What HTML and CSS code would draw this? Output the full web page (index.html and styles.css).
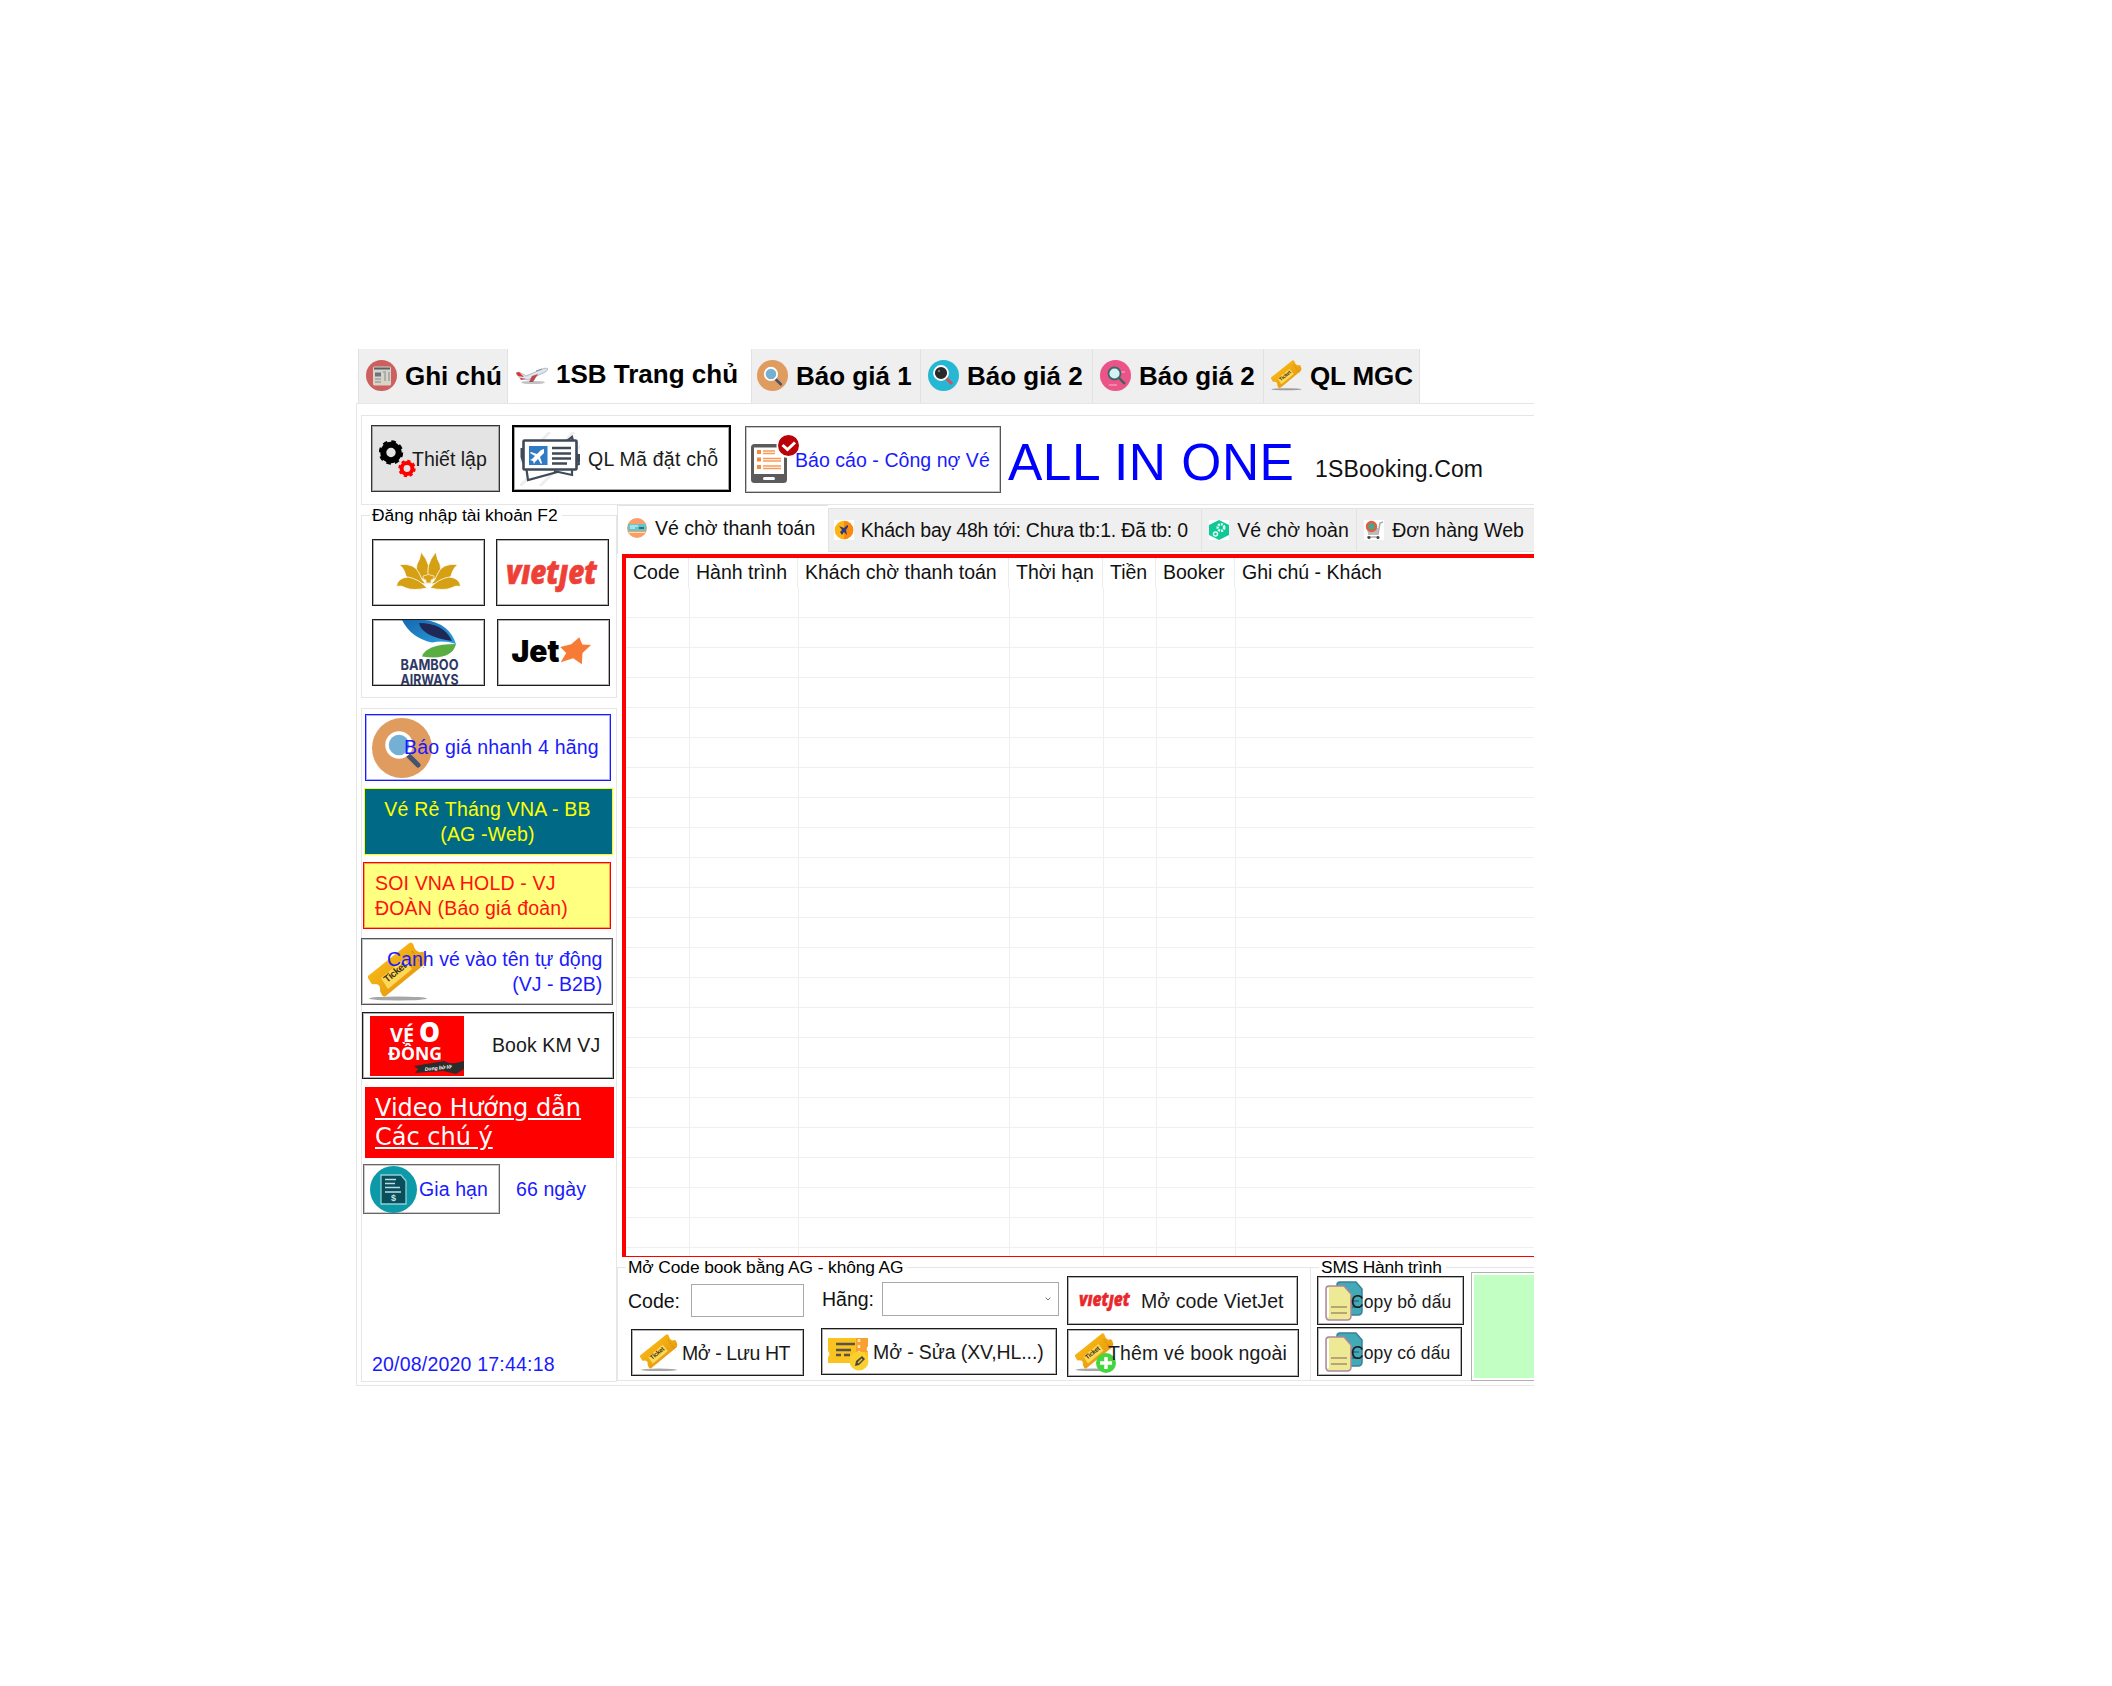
FILE: index.html
```html
<!DOCTYPE html>
<html lang="vi">
<head>
<meta charset="utf-8">
<title>1SBooking - All in one</title>
<link rel="stylesheet" href="styles.css">
</head>
<body>
<svg class="defs" width="0" height="0" aria-hidden="true">
  <defs>
    <linearGradient id="gold" x1="0" y1="0" x2="1" y2="1"><stop offset="0" stop-color="#ffc81c"/><stop offset="1" stop-color="#df8a0a"/></linearGradient>
    <linearGradient id="blue" x1="0" y1="0" x2="1" y2="1"><stop offset="0" stop-color="#1668b0"/><stop offset="1" stop-color="#2ba0dc"/></linearGradient>
    <symbol id="ticket" viewBox="0 0 60 60">
      <ellipse cx="30" cy="56.500" rx="29" ry="2" fill="#000" opacity=".35"/>
      <path d="M0 34 40 2q3-3 5 0l2 5q3 4 6 3 2-1 4 1l2 6-1 4L19 53q-3 3-5 0l-2-4q1-7-5-7-3 1-4-1L0 36z" fill="url(#gold)"/>
      <path d="M13 36 36 17l8 10-24 20z" fill="#ffd858"/>
      <path d="m44 9 12 17" stroke="#c97a08" stroke-dasharray="3 2" fill="none"/>
      <text x="0" y="0" transform="translate(19 41) rotate(-39)" font-family="Liberation Sans" font-weight="700" font-size="10" textLength="26" fill="#43350c">Ticket</text>
    </symbol>
    <symbol id="copy" viewBox="0 0 38 40">
      <path d="M15 1h16l6 7v22q0 4-4 4H15q-3 0-3-3V4q0-3 3-3z" fill="#42a9b7" stroke="#3b7f99" stroke-width="1.500"/>
      <path d="M26 20h8m-8 6h8" stroke="#2d6f85" stroke-width="1.500"/>
      <path d="M4 5h15l7 8v22q0 4-4 4H4q-3 0-3-4V8q0-3 3-3z" fill="#eee995" stroke="#ad86a0" stroke-width="1.500"/>
      <path d="M3 7v29" stroke="#fff" stroke-width="2"/>
      <path d="M6 26h16M6 32h16" stroke="#a98c6c" stroke-width="1.500"/>
    </symbol>
    <symbol id="search" viewBox="0 0 60 60">
      <path d="m36 37 10 10" stroke="#44546e" stroke-width="5" stroke-linecap="round"/>
      <circle cx="27" cy="27" r="12" fill="#74b0d4" stroke="#fff" stroke-width="3.500"/>
    </symbol>
    <g id="petals">
      <path d="M48 12Q60 26 54.500 39 40 41 44 24 47 20 48 12z"/>
      <path d="M26 24.500Q42 23 46 33 49 41 53 44 38 43 33 36 31 28 26 24.500z"/>
      <path d="M23.500 46.500Q24 38 35 37 46 39 54 48 40 51 33 48 28 45 23.500 46.500z"/>
    </g>
  </defs>
</svg>

<main class="app">
  <nav class="tabs">
    <div class="tab tab-note">
      <svg class="tab-icon" viewBox="0 0 31 31"><circle cx="15.500" cy="15.500" r="15.500" fill="#cc5f5f"/><rect x="7" y="6.500" width="18" height="19" rx="1.500" fill="#d8d3c4"/><path d="M8 8.500h16" stroke="#555f6e" stroke-width="2"/><path d="M9 12.500h6v4H9z" fill="#66758a"/><path d="M17 12h2v9m4-9v9M9 19h6m-6 3h6" stroke="#a9b0ae" stroke-width="2" fill="none"/></svg>
      <span>Ghi chú</span>
    </div>
    <div class="tab tab-home">
      <svg class="tab-icon" viewBox="0 0 32 20"><ellipse cx="17" cy="17.500" rx="12" ry="1.600" fill="#777" opacity=".45"/><path d="M0 8 3 7l7 4 14-6q6-3 8-1-1 3-7 5L12 15l-8-2z" fill="#dfe5ec" stroke="#8894a6" stroke-width=".6"/><path d="m0 8 3-1 5 5-6-1z" fill="#d33"/><path d="m4 13 6 1-5 1z" fill="#c33"/><path d="m16 11 6-2-5 8h-4z" fill="#b94a4c"/><path d="m20 6 6-2" stroke="#8090a0"/></svg>
      <span>1SB Trang chủ</span>
    </div>
    <div class="tab tab-q1">
      <svg class="tab-icon" viewBox="0 0 60 60"><circle cx="30" cy="30" r="30" fill="#e09b5f"/><use href="#search"/></svg>
      <span>Báo giá 1</span>
    </div>
    <div class="tab tab-q2">
      <svg class="tab-icon" viewBox="0 0 31 31"><circle cx="15.500" cy="15.500" r="15.500" fill="#26b7d3"/><path d="m18 18 6 6" stroke="#d4505c" stroke-width="3"/><circle cx="13" cy="13" r="7" fill="#2b2829" stroke="#fff" stroke-width="1.800"/><circle cx="11" cy="11" r="1.200" fill="#777"/></svg>
      <span>Báo giá 2</span>
    </div>
    <div class="tab tab-q3">
      <svg class="tab-icon" viewBox="0 0 31 31"><circle cx="15.500" cy="15.500" r="15.500" fill="#ea5486"/><path d="M9 25h8m4-13h4" stroke="#f597b6" stroke-width="1.500"/><path d="m19 18 6 6" stroke="#396558" stroke-width="2.400"/><circle cx="14.500" cy="13.500" r="6" fill="#d4f2f2" stroke="#3d6770" stroke-width="1.800"/></svg>
      <span>Báo giá 2</span>
    </div>
    <div class="tab tab-mgc">
      <svg class="tab-icon" viewBox="0 0 60 60"><use href="#ticket"/></svg>
      <span>QL MGC</span>
    </div>
  </nav>

  <section class="panel">
    <header class="toolbar">
      <button class="btn btn-setup">
        <svg class="ic-gears" viewBox="0 0 37 38"><circle cx="12" cy="12.500" r="7.700" fill="none" stroke="#000" stroke-width="6"/><circle cx="12" cy="12.500" r="10.800" fill="none" stroke="#000" stroke-width="2.800" stroke-dasharray="4.500 3.980"/><circle cx="28" cy="28.500" r="5.400" fill="none" stroke="#f00" stroke-width="4"/><circle cx="28" cy="28.500" r="7.600" fill="none" stroke="#f00" stroke-width="2.200" stroke-dasharray="3.200 2.770"/></svg>
        <span>Thiết lập</span>
      </button>
      <button class="btn btn-pnr">
        <svg class="ic-pnr" viewBox="0 0 60 54"><path d="M0 54 54 0M20 54 60 14M0 30 30 0" stroke="#eee" stroke-width="3"/><path d="m5 27 3 21 44-12M43 12l9-7 7 27-8 3" fill="#fff" stroke="#3f4a59" stroke-width="2.200"/><path d="m34 39 18 4V36" fill="#fff" stroke="#3f4a59" stroke-width="2.200"/><path d="M2 16v9l2 6M59 22v8" stroke="#3f4a59" stroke-width="3"/><rect x="3.500" y="8.500" width="53" height="29" rx="1" fill="#fff" stroke="#3f4a59" stroke-width="2.600"/><rect x="9" y="14" width="18.500" height="19" fill="#2f7bc4"/><path d="m24 17-3 1-4 4-6-2-1 1 5 3-3 3-2 1 3 1 1 3 1-2 3-3 3 5 1-1-2-6 4-4z" fill="#fff"/><path d="M32 16h19M32 21.500h19M32 26.500h19M32 31.500h15" stroke="#3f4a59" stroke-width="2.300"/></svg>
        <span>QL Mã đặt chỗ</span>
      </button>
      <button class="btn btn-report">
        <svg class="ic-report" viewBox="0 0 49 49"><rect x="0" y="9" width="36" height="39" rx="3.500" fill="#5b5b5b"/><path d="M3 12.500h30V39H3z" fill="#fff"/><path d="M6 17h4m-4 7.500h4M6 32h4" stroke="#f48a3c" stroke-width="4"/><path d="M12 16h12m-12 2.500h12M12 23.500h18M12 26h18M12 31h18M12 33.500h18" stroke="#f79a55" stroke-width="1.600"/><rect x="12" y="42" width="12" height="3" rx="1.500" fill="#fff"/><circle cx="37.500" cy="11" r="12" fill="#fff"/><circle cx="37.500" cy="10.500" r="10.500" fill="#b90308"/><path d="m31.500 10 5 4.500 7.500-7" fill="none" stroke="#fff" stroke-width="3"/></svg>
        <span>Báo cáo - Công nợ Vé</span>
      </button>
      <h1 class="brand">ALL IN ONE</h1>
      <span class="site">1SBooking.Com</span>
    </header>

    <div class="body">
      <aside class="side">
        <section class="group login">
          <h2 class="legend">Đăng nhập tài khoản F2</h2>
          <div class="airlines">
            <button class="btn air">
              <svg viewBox="0 0 111 65"><g fill="#d5a014" stroke="#fff" stroke-width=".8"><use href="#petals"/><use href="#petals" transform="translate(111 0) scale(-1 1)"/></g><path d="M50 36q5.500-3 11 0 1 3-3 4v3h-5v-3q-4-1-3-4z" fill="#d5a014" stroke="#f1dfae"/></svg>
            </button>
            <button class="btn air air-vj">
              <svg viewBox="0 0 111 65"><text x="9" y="44" font-family="Open Sans" font-weight="800" font-style="italic" font-size="34" textLength="91" lengthAdjust="spacingAndGlyphs" fill="#ee4036" stroke="#ee4036" stroke-width=".6">vıetȷet</text></svg>
            </button>
            <button class="btn air air-bb">
              <svg viewBox="0 0 111 65"><path d="M29 0h23Q76 3 83 24 71 20 59 22.500 38 18 29 0z" fill="url(#blue)"/><path d="M46 3Q71 3 79 21 64 19 55 14 47 9 46 3z" fill="#202857"/><path d="M49 36.500Q53 24 83 24 79 41 49 36.500z" fill="#5aae41"/><g font-family="Inter" font-weight="700" font-size="14.500" fill="#2f3765"><text x="27.500" y="50" textLength="58" lengthAdjust="spacingAndGlyphs">BAMBOO</text><text x="27.500" y="64.500" textLength="58" lengthAdjust="spacingAndGlyphs">AIRWAYS</text></g></svg>
            </button>
            <button class="btn air air-jet">
              <svg viewBox="0 0 111 65"><text x="13.500" y="42" font-family="Inter" font-weight="900" font-size="30" textLength="48" lengthAdjust="spacingAndGlyphs" fill="#000">Jet</text><path d="m81.300 17.300 3 7.200 8.800.5-8.600 8-.7 11.300-8.600-6-12.500 4 5.500-9.300-6-6 11-2.700z" fill="#f77b35"/></svg>
            </button>
          </div>
        </section>

        <section class="group actions">
          <button class="btn act act-quick">
            <svg width="60" height="60" viewBox="0 0 60 60"><circle cx="30" cy="30" r="30" fill="#e09b5f"/><use href="#search"/></svg>
            <span>Báo giá nhanh 4 hãng</span>
          </button>
          <button class="btn act act-cheap"><span>Vé Rẻ Tháng VNA - BB<br>(AG -Web)</span></button>
          <button class="btn act act-soi"><span>SOI VNA HOLD - VJ<br>ĐOÀN (Báo giá đoàn)</span></button>
          <button class="btn act act-watch">
            <svg width="60" height="60"><use href="#ticket"/></svg>
            <span>Canh vé vào tên tự động<br>(VJ - B2B)</span>
          </button>
          <button class="btn act act-km">
            <svg width="94" height="60" viewBox="0 0 94 60"><path fill="#f00" d="M0 0h94v60H0z"/><g font-family="Open Sans" font-weight="700" fill="#fff"><text x="20" y="26" font-size="19" textLength="24" lengthAdjust="spacingAndGlyphs">VÉ</text><text x="49" y="26" font-size="28" font-weight="800" textLength="21" lengthAdjust="spacingAndGlyphs">O</text><text x="18" y="44" font-size="18" textLength="54" lengthAdjust="spacingAndGlyphs">ĐỒNG</text></g><path d="m44 50 30-5q6 3 12 2l8-2v8l-8 5-13-3-28 2 3-4z" fill="#2c2c2c"/><text x="55" y="55" transform="rotate(-6 55 55)" font-family="Liberation Sans" font-size="5" font-weight="700" font-style="italic" fill="#fff">Dung bở lỡ</text></svg>
            <span>Book KM VJ</span>
          </button>
          <a class="video">Video Hướng dẫn<br>Các chú ý</a>
          <div class="renew">
            <button class="btn btn-renew">
              <svg width="47" height="47" viewBox="0 0 47 47"><circle cx="23.500" cy="23.500" r="23.500" fill="#0c9aa9"/><path d="M11 9h20l5 6v23H11z" fill="#0b4e5b" stroke="#8fd0d6" stroke-width="1.300"/><path d="M15 13.500h11M15 17.500h10M15 21.500h15M15 26h16" stroke="#b6dfe2" stroke-width="1.300"/><text x="21" y="35" font-family="Liberation Sans" font-size="9" font-weight="700" fill="#c4e6e8">$</text></svg>
              <span>Gia hạn</span>
            </button>
            <span class="days">66 ngày</span>
          </div>
          <time class="clock">20/08/2020 17:44:18</time>
        </section>
      </aside>

      <section class="content">
        <nav class="subtabs">
          <div class="sub sub-pay">
            <svg viewBox="0 0 20 20"><circle cx="10" cy="10" r="10" fill="#fa9d6b"/><path d="M1 6h18v7H1z" fill="#62c6cc"/><path d="M3 8h8m-8 2h5" stroke="#e6ffff"/><path d="M12 10h5" stroke="#24505e" stroke-width="1.500"/><path d="M2 14.500h16" stroke="#ffe39d"/></svg>
            <span>Vé chờ thanh toán</span>
          </div>
          <div class="sub sub-fly">
            <svg viewBox="0 0 20 20"><path fill="#fff" d="M0 0h20v20H0z"/><circle cx="10" cy="10" r="9.300" fill="#fdb516"/><path d="M10 .7a9.300 9.300 0 0 1 0 18.600z" fill="#f98b12"/><path d="m14 5-2 1-2 2-5-2 3 4-2 2 2 3 2-3 3 3-1-5 2-3z" fill="#2e3d79"/></svg>
            <span>Khách bay 48h tới: Chưa tb:1. Đã tb: 0</span>
          </div>
          <div class="sub sub-refund">
            <svg viewBox="0 0 20 20"><path fill="#fff" d="M0 0h20v20H0z"/><path d="m10 0 10 5v10l-10 5-10-5V5z" fill="#12c896"/><circle cx="12" cy="7.500" r="3.300" fill="none" stroke="#e6fff7" stroke-width="2.500" stroke-dasharray="2 1"/><circle cx="6.500" cy="14" r="2" fill="none" stroke="#d5fff1" stroke-width="1.500"/></svg>
            <span>Vé chờ hoàn</span>
          </div>
          <div class="sub sub-web">
            <svg viewBox="0 0 20 20"><path fill="#fff" d="M0 0h20v20H0z"/><path d="m19 2-3 1-2 11H4" fill="none" stroke="#aaa" stroke-width="1.500"/><path d="M3 8h12l-1 6H4z" fill="#bbb"/><circle cx="7.500" cy="6.500" r="4.500" fill="#4aa58f" stroke="#e75c3b" stroke-width="2.400"/><path d="M3 17h12" stroke="#888"/><circle cx="5" cy="17.500" r="1.500" fill="#444"/><circle cx="14" cy="17.500" r="1.500" fill="#444"/></svg>
            <span>Đơn hàng Web</span>
          </div>
        </nav>

        <div class="table">
          <div class="thead">
            <div>Code</div><div>Hành trình</div><div>Khách chờ thanh toán</div><div>Thời hạn</div><div>Tiền</div><div>Booker</div><div>Ghi chú - Khách</div>
          </div>
          <div class="tbody"><div></div><div></div><div></div><div></div><div></div><div></div><div></div></div>
        </div>

        <footer class="bottom">
          <section class="group code">
            <h2 class="legend">Mở Code book bằng AG - không AG</h2>
            <div class="cols">
              <div class="col col1">
                <label class="field">Code:<input type="text"></label>
                <button class="btn btn-save"><svg width="38" height="38"><use href="#ticket"/></svg><span>Mở - Lưu HT</span></button>
              </div>
              <div class="col col2">
                <label class="field">Hãng:<span class="select"><svg width="6" height="4" viewBox="0 0 6 4"><path d="m.5.5 2.500 2.500L5.500.5" fill="none" stroke="#777"/></svg></span></label>
                <button class="btn btn-edit">
                  <svg width="42" height="38" viewBox="0 0 42 38"><path d="M1 5h40v8q-3 3 0 6v11H1v-6q3-3 0-6z" fill="#fbc31f"/><path d="M29 5h12v8q-3 3 0 6H29z" fill="#f9a030"/><path d="M9 11h19M9 17h15M9 22h5m3 0h6" stroke="#56524c" stroke-width="2.300"/><path d="M32 6v18" stroke="#ffe9b8" stroke-width="2.500" stroke-dasharray="3 3"/><circle cx="32" cy="28" r="9.500" fill="#fad02f"/><path d="m28 33 1-5 6-5 3 3-6 6z" fill="#4c463c"/><path d="m31 30 4-4" stroke="#fad02f" stroke-width="1.500"/></svg>
                  <span>Mở - Sửa (XV,HL...)</span>
                </button>
              </div>
              <div class="col col3">
                <button class="btn btn-vj"><svg width="52" height="24" viewBox="0 0 52 24"><text x="0" y="17" font-family="Open Sans" font-weight="800" font-style="italic" font-size="19" textLength="51" lengthAdjust="spacingAndGlyphs" fill="#e8282c" stroke="#e8282c" stroke-width=".4">vıetȷet</text></svg><span>Mở code VietJet</span></button>
                <button class="btn btn-add"><svg width="41" height="40" viewBox="0 0 41 40"><svg width="39" height="39" viewBox="0 0 60 60"><use href="#ticket"/></svg><circle cx="31" cy="30" r="10" fill="#45d53e"/><path d="M31 24v12m-6-6h12" stroke="#fff" stroke-width="3.500"/></svg><span>Thêm vé book ngoài</span></button>
              </div>
            </div>
          </section>
          <section class="group sms">
            <h2 class="legend">SMS Hành trình</h2>
            <div class="cols">
              <div class="col col4">
                <button class="btn btn-copy"><svg width="38" height="40"><use href="#copy"/></svg><span>Copy bỏ dấu</span></button>
                <button class="btn btn-copy btn-copy2"><svg width="38" height="40"><use href="#copy"/></svg><span>Copy có dấu</span></button>
              </div>
              <div class="preview"></div>
            </div>
          </section>
        </footer>
      </section>
    </div>
  </section>
</main>
</body>
</html>
```
FILE: styles.css
```css
* { box-sizing: border-box; }

body {
  margin: 0;
  background: #fff;
  color: #111;
  font-family: "Liberation Sans", Arial, sans-serif;
  font-size: 19.5px;
  line-height: 24px;
}

.defs { position: absolute; }

svg { flex: none; display: block; }

.app {
  width: 1178px;
  height: 1037px;
  margin: 349px 0 0 356px;
  overflow: hidden;
  white-space: nowrap;
}

/* main tabs */
.tabs { display: flex; height: 54px; padding-left: 2px; }

.tab {
  display: flex;
  align-items: center;
  background: #efefef;
  border-left: 1px solid #e2e2e2;
  color: #000;
  font-size: 26px;
  font-weight: 700;
  padding-bottom: 1px;
}

.tab-icon { width: 31px; height: 31px; margin-right: 8px; }
.tab-note { width: 149px; padding-left: 7px; }
.tab-home { width: 244px; padding: 0 0 5px 8px; background: #fff; }
.tab-q1 { width: 169px; padding-left: 5px; }
.tab-q2 { width: 172px; padding-left: 7px; }
.tab-q3 { width: 171px; padding-left: 7px; }
.tab-mgc { width: 157px; padding-left: 7px; border-right: 1px solid #e2e2e2; letter-spacing: -.1px; }
.tab-home .tab-icon { width: 32px; height: 20px; margin-top: 3px; }

.panel {
  height: 983px;
  padding: 11px 0 0 4px;
  border: solid #e6e6e6;
  border-width: 1px 0 1px 1px;
}

/* buttons */
.btn {
  --line: #1c1c1c;
  display: flex;
  align-items: center;
  margin: 0;
  padding: 0;
  background: #fff;
  border: 1px solid var(--line);
  box-shadow: inset 0 0 0 1px color-mix(in srgb, var(--line) 35%, transparent);
  color: #1a1a1a;
  font: inherit;
  white-space: nowrap;
  overflow: hidden;
}

.btn span { position: relative; }

.toolbar {
  display: flex;
  height: 90px;
  padding: 9px 0 0 9px;
  border: solid #e6e6e6;
  border-width: 1px 0 1px 1px;
}

.btn-setup { width: 129px; height: 67px; padding-left: 7px; background: #e4e4e4; --line: #333; }
.ic-gears { width: 37px; height: 38px; }
.btn-setup span { margin-left: -4px; }
.btn-pnr { width: 219px; height: 67px; margin-left: 12px; padding-left: 6px; border: 2px solid #000; --line: #000; letter-spacing: .25px; }
.ic-pnr { width: 60px; height: 54px; margin-right: 8px; }
.btn-report { width: 256px; height: 67px; margin: 1px 0 0 14px; padding-left: 5px; color: #1a1aff; --line: #555; }
.ic-report { width: 49px; height: 49px; }
.btn-report span { margin-left: -5px; letter-spacing: .05px; }

.brand {
  margin: 9px 0 0 7px;
  width: 307px;
  color: #00f;
  font-size: 51.5px;
  font-weight: 400;
  line-height: 56px;
  letter-spacing: .5px;
}

.site { margin-top: 32px; font-size: 23px; letter-spacing: .15px; color: #111; }

.body { display: flex; height: 877px; }

/* left column */
.side { width: 256px; flex: none; }

.group { border: 1px solid #e6e6e6; }

.legend {
  width: max-content;
  margin: -10px 0 0 8px;
  padding: 0 4px 0 2px;
  background: #fff;
  color: #000;
  font-size: 17.4px;
  font-weight: 400;
  line-height: 18px;
}

.login { height: 183px; margin-top: 10px; }

.airlines {
  display: grid;
  grid-template-columns: 113px 114px;
  gap: 13px 11px;
  padding: 15px 0 0 10px;
}

.air { width: 113px; height: 67px; }
.air svg { width: 111px; height: 65px; }
.air-jet { margin-left: 1px; }

.actions {
  display: flex;
  flex-direction: column;
  height: 674px;
  margin-top: 10px;
  padding-top: 5px;
}

.act { flex: none; height: 67px; line-height: 25px; }
.act-quick { width: 246px; margin-left: 3px; padding-left: 6px; color: #1a1aff; --line: #1a1aff; letter-spacing: .2px; }
.act-quick span { margin-left: -28px; }
.act-cheap { width: 249px; margin: 7px 0 0 2px; justify-content: center; background: #006a86; color: #ff0; --line: #ff0; box-shadow: none; letter-spacing: .2px; }
.act-cheap span { text-align: center; margin-left: -2px; }
.act-soi { width: 248px; margin: 7px 0 0 1px; padding-left: 11px; background: #ffff80; color: #ff1010; --line: #f00; text-align: left; letter-spacing: .17px; }
.act-watch { width: 252px; margin: 9px 0 0 -1px; padding-left: 6px; color: #1a1aff; --line: #555; text-align: right; }
.act-watch span { margin: 0 0 0 -41px; letter-spacing: .03px; }
.act-km { width: 252px; margin: 7px 0 0 0; padding-left: 7px; }
.act-km span { margin-left: 28px; letter-spacing: .1px; }

.video {
  width: 249px;
  height: 71px;
  margin: 8px 0 0 3px;
  padding: 7px 10px 0;
  background: #f00;
  color: #fff;
  font-family: "DejaVu Sans", Verdana, sans-serif;
  font-size: 24px;
  line-height: 29px;
  text-decoration: underline;
}

.renew { display: flex; align-items: center; margin: 6px 0 0 1px; color: #1a1aff; }
.btn-renew { width: 137px; height: 50px; padding-left: 6px; color: inherit; --line: #666; }
.btn-renew span { margin-left: 2px; letter-spacing: .1px; }
.days { margin: 0 0 0 16px; letter-spacing: .1px; }
.clock { margin: auto 0 5px 10px; color: #1a1aff; letter-spacing: .2px; }

/* content */
.content { flex: 1; min-width: 0; }

.subtabs { display: flex; align-items: flex-end; height: 49px; border-left: 1px solid #e2e2e2; }

.sub {
  display: flex;
  align-items: center;
  height: 44px;
  margin-bottom: 2px;
  padding-bottom: 1px;
  background: #efefef;
  border: solid #e2e2e2;
  border-width: 1px 0 1px 1px;
  color: #111;
}

.sub svg { width: 20px; height: 20px; margin-right: 7px; }
.sub-pay { width: 210px; height: 49px; margin: 0; padding: 0 0 5px 9px; background: #fff; border-width: 1px 0 0; }
.sub-pay svg { margin-right: 8px; }
.sub-fly { width: 374px; padding-left: 5px; letter-spacing: -.2px; }
.sub-refund { width: 155px; padding-left: 7px; }
.sub-web { width: 178px; padding-left: 7px; }
.sub-refund svg, .sub-web svg { margin-right: 8px; }

.table {
  display: flex;
  flex-direction: column;
  height: 703px;
  margin-left: 5px;
  border: solid #f00;
  border-width: 4px 0 1px 4px;
  box-shadow: inset 0 -1px #ff9c9c;
}

.thead, .tbody {
  display: grid;
  grid-template-columns: 63px 109px 211px 94px 53px 79px 1fr;
}

.thead { flex: none; height: 30px; color: #111; }
.thead div { padding: 2px 0 0 7px; border-right: 1px solid #ececec; }
.thead div:last-child, .tbody div:last-child { border-right: 0; }

.tbody {
  flex: 1;
  background: repeating-linear-gradient(#fff 0 29px, #f0f0f0 29px 30px);
}
.tbody div { border-right: 1px solid #efefef; }
.tbody div:not(:last-child) { margin-right: -1px; }

/* bottom forms */
.bottom { display: flex; padding-top: 10px; }
.bottom .group { height: 114px; border-right: 0; }
.code { width: 693px; }
.code .legend { letter-spacing: -.12px; }
.sms .legend { letter-spacing: -.22px; }
.sms { flex: 1; }

.cols { display: flex; }
.col { display: flex; flex-direction: column; align-items: flex-end; }

.field { display: flex; align-items: center; }
.field input, .select { border: 1px solid #a9a9a9; background: #fff; }

.col1 { width: 186px; padding-top: 8px; }
.col1 input { width: 113px; height: 33px; margin: 0 0 0 11px; padding: 0; }
.btn-save { width: 173px; height: 47px; margin-top: 12px; padding-left: 8px; }
.btn-save span { margin-left: 4px; letter-spacing: -.4px; }

.col2 { width: 255px; padding-top: 6px; }
.select { display: flex; align-items: center; justify-content: flex-end; width: 177px; height: 34px; margin-left: 8px; padding-right: 7px; }
.btn-edit { width: 236px; height: 47px; margin: 12px 2px 0 0; padding-left: 5px; }
.btn-edit span { margin-left: 4px; letter-spacing: -.1px; }

.col3 { align-items: flex-start; margin-left: 8px; }
.btn-vj { width: 231px; height: 49px; padding-left: 11px; }
.btn-vj span { margin-left: 10px; letter-spacing: .08px; }
.btn-add { width: 232px; height: 48px; margin-top: 4px; padding-left: 7px; }
.btn-add span { margin-left: -8px; letter-spacing: .12px; }

.col4 { align-items: flex-start; margin-left: 6px; }
.btn-copy { width: 147px; height: 49px; padding-left: 7px; font-size: 17.5px; letter-spacing: .1px; }
.btn-copy span { margin: 2px 0 0 -12px; }
.btn-copy2 { width: 145px; margin-top: 2px; }

.preview {
  flex: 1;
  height: 109px;
  margin: -4px 0 0 7px;
  border: 1px solid #b0b0b0;
  border-right: 0;
  padding: 2px 0 2px 2px;
  background: #c2ffc2 content-box;
}
```
